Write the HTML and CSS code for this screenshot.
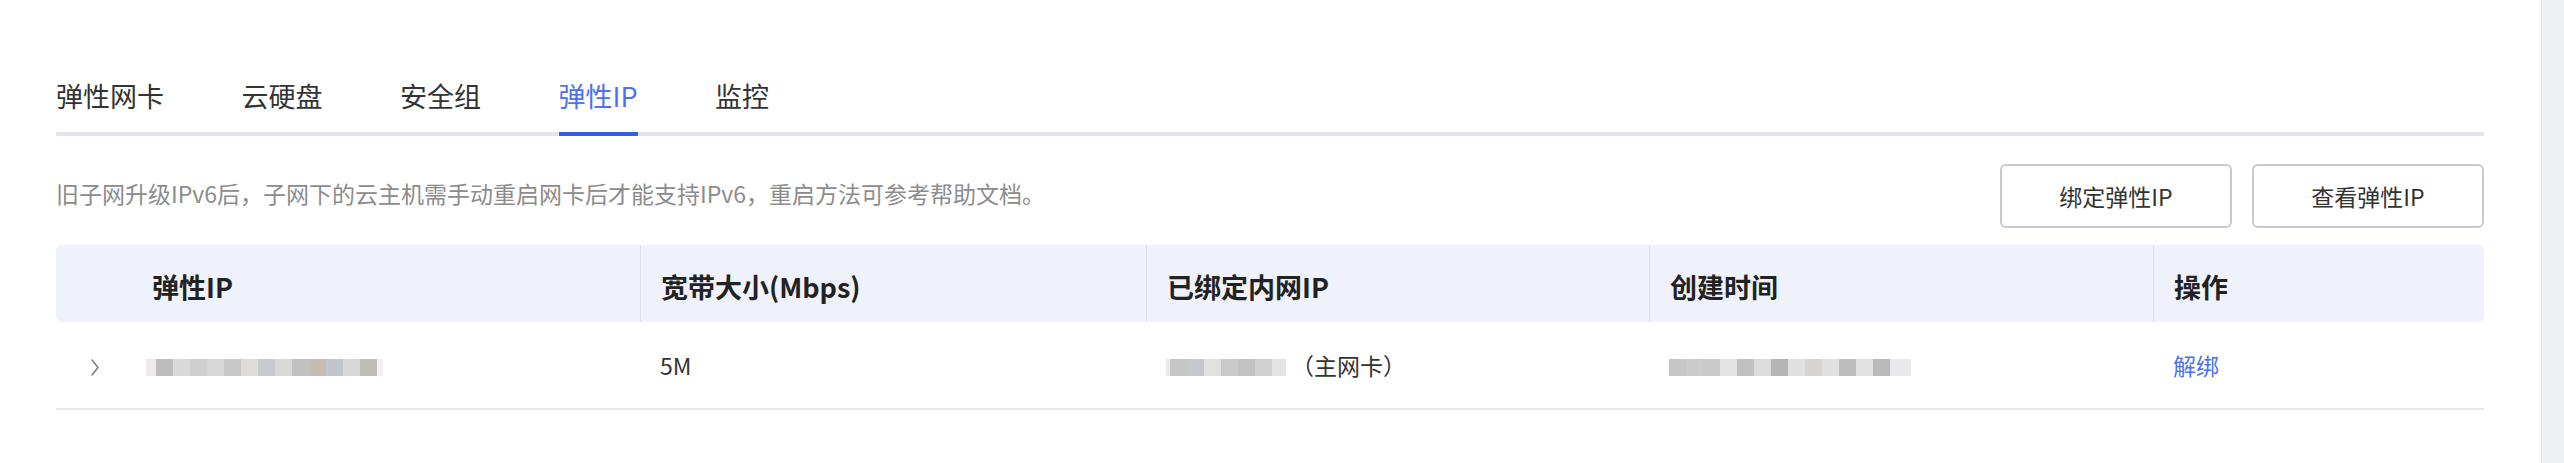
FILE: index.html
```html
<!DOCTYPE html>
<html lang="zh-CN">
<head>
    <meta charset="UTF-8">
    <meta name="viewport" content="width=device-width, initial-scale=1.0">
    <title>弹性IP</title>
    <link rel="stylesheet" href="styles.css">
</head>
<body>
    <div class="main">
        <div class="tabs">
            <div class="tab">弹性网卡</div>
            <div class="tab">云硬盘</div>
            <div class="tab">安全组</div>
            <div class="tab active">弹性IP</div>
            <div class="tab">监控</div>
        </div>

        <div class="toolbar">
            <p class="tip">旧子网升级IPv6后，子网下的云主机需手动重启网卡后才能支持IPv6，重启方法可参考帮助文档。</p>
            <div class="actions">
                <button class="btn">绑定弹性IP</button>
                <button class="btn">查看弹性IP</button>
            </div>
        </div>

        <div class="table">
            <div class="thead">
                <div class="th th-first">弹性IP</div>
                <div class="th">宽带大小(Mbps)</div>
                <div class="th">已绑定内网IP</div>
                <div class="th">创建时间</div>
                <div class="th">操作</div>
            </div>
            <div class="tr">
                <div class="td td-first">
                    <svg class="expand" viewBox="0 0 12 20" fill="none" stroke="currentColor" stroke-width="1.5" stroke-linecap="round" stroke-linejoin="round">
                        <polyline points="4 3 10 10.5 4 18"></polyline>
                    </svg>
                    <span class="blur blur-ip"></span>
                </div>
                <div class="td">5M</div>
                <div class="td">
                    <span class="blur blur-inner"></span>
                    <span class="nic">（主网卡）</span>
                </div>
                <div class="td"><span class="blur blur-time"></span></div>
                <div class="td"><a class="link" href="#">解绑</a></div>
            </div>
        </div>
    </div>
    <div class="scrollbar"></div>
</body>
</html>
```

FILE: styles.css
```css
:root {
    --text-color: #333333;
    --muted: #8c8c8c;
    --primary: #2f5ef0;
    --primary-text: #4d70f5;
    --line: #e2e5ee;
    --head-bg: #eff2fb;
    --radius: 6px;
}

* {
    margin: 0;
    padding: 0;
    box-sizing: border-box;
}

body {
    font-family: "Noto Sans CJK SC", "Noto Sans", sans-serif;
    color: var(--text-color);
    background: #ffffff;
    height: 100vh;
    display: flex;
    overflow: hidden;
}

.main {
    flex: 1;
    padding: 77px 57px 0 56px;
}

.scrollbar {
    width: 23px;
    background: #eeeff3;
    border-left: 1px solid #e4e5ea;
}

/* tabs */
.tabs {
    display: flex;
    gap: 77.5px;
    border-bottom: 4px solid var(--line);
}

.tab {
    font-size: 27px;
    line-height: 38px;
    padding-bottom: 17px;
    border-bottom: 4px solid transparent;
    margin-bottom: -4px;
    color: var(--text-color);
}

.tab.active {
    color: var(--primary-text);
    border-bottom-color: var(--primary);
}

/* tip + buttons */
.toolbar {
    margin-top: 28px;
    display: flex;
    align-items: center;
    justify-content: space-between;
}

.tip {
    font-size: 23px;
    color: var(--muted);
    margin-bottom: 6px;
}

.actions {
    display: flex;
    gap: 20px;
}

.btn {
    width: 232px;
    height: 64px;
    border: 2px solid #c6c9d0;
    border-radius: var(--radius);
    background: #ffffff;
    font-family: inherit;
    font-size: 23px;
    color: var(--text-color);
}

/* table */
.table {
    margin-top: 17px;
}

.thead,
.tr {
    display: grid;
    grid-template-columns: 584px 506px 503px 504px 1fr;
}

.thead {
    height: 77px;
    background: var(--head-bg);
    border-radius: var(--radius);
    font-size: 27px;
    font-weight: 700;
    color: #222222;
}

.th {
    display: flex;
    align-items: center;
    padding: 6px 0 0 20px;
    border-left: 1px solid #dde1ec;
}

.th-first {
    padding-left: 96px;
    border-left: none;
}

.tr {
    height: 88px;
    border-bottom: 2px solid #e7e9f0;
    font-size: 23px;
    color: var(--text-color);
}

.td {
    display: flex;
    align-items: center;
    padding-left: 20px;
}

.td-first {
    padding-left: 32px;
}

.expand {
    width: 12px;
    height: 20px;
    color: #7a7a7a;
    margin: 4px 46px 0 0;
}

.blur {
    display: inline-block;
    height: 17px;
    margin-top: 4px;
}

.blur-ip {
    width: 237px;
    background: linear-gradient(90deg,
        #efeaea 0 10px, #bdbdbd 10px 27px, #d9d9d9 27px 44px, #cfcfcf 44px 61px,
        #d7d7d7 61px 78px, #c8c8c8 78px 95px, #e0dbd7 95px 112px, #c7cad0 112px 129px,
        #d9d9d9 129px 146px, #c1c1c1 146px 163px, #c9bab2 163px 180px, #c1c5cc 180px 197px,
        #d8d8d8 197px 214px, #c0bcb8 214px 231px, #f0f0f0 231px);
}

.blur-inner {
    width: 120px;
    background: linear-gradient(90deg,
        #eaeaea 0 4px, #c6c6c6 4px 21px, #c3c7ce 21px 38px, #e1e1e1 38px 55px,
        #c9c9c9 55px 72px, #c2c2c2 72px 89px, #d1d1d1 89px 106px, #e3e3e3 106px);
}

.blur-time {
    width: 242px;
    background: linear-gradient(90deg,
        #c6c6c6 0 17px, #cbcbcb 17px 34px, #c9c9c9 34px 51px, #e3e3e3 51px 68px,
        #c1c1c1 68px 85px, #dcdcdc 85px 102px, #b5b5b5 102px 119px, #e0e0e0 119px 136px,
        #d7d3cf 136px 153px, #e0e0e0 153px 170px, #bebebe 170px 187px, #e2e2e2 187px 204px,
        #b9b9b9 204px 221px, #e9e9ed 221px);
}

.nic {
    margin-left: 5px;
}

.link {
    color: #4b72f6;
    text-decoration: none;
}
```
